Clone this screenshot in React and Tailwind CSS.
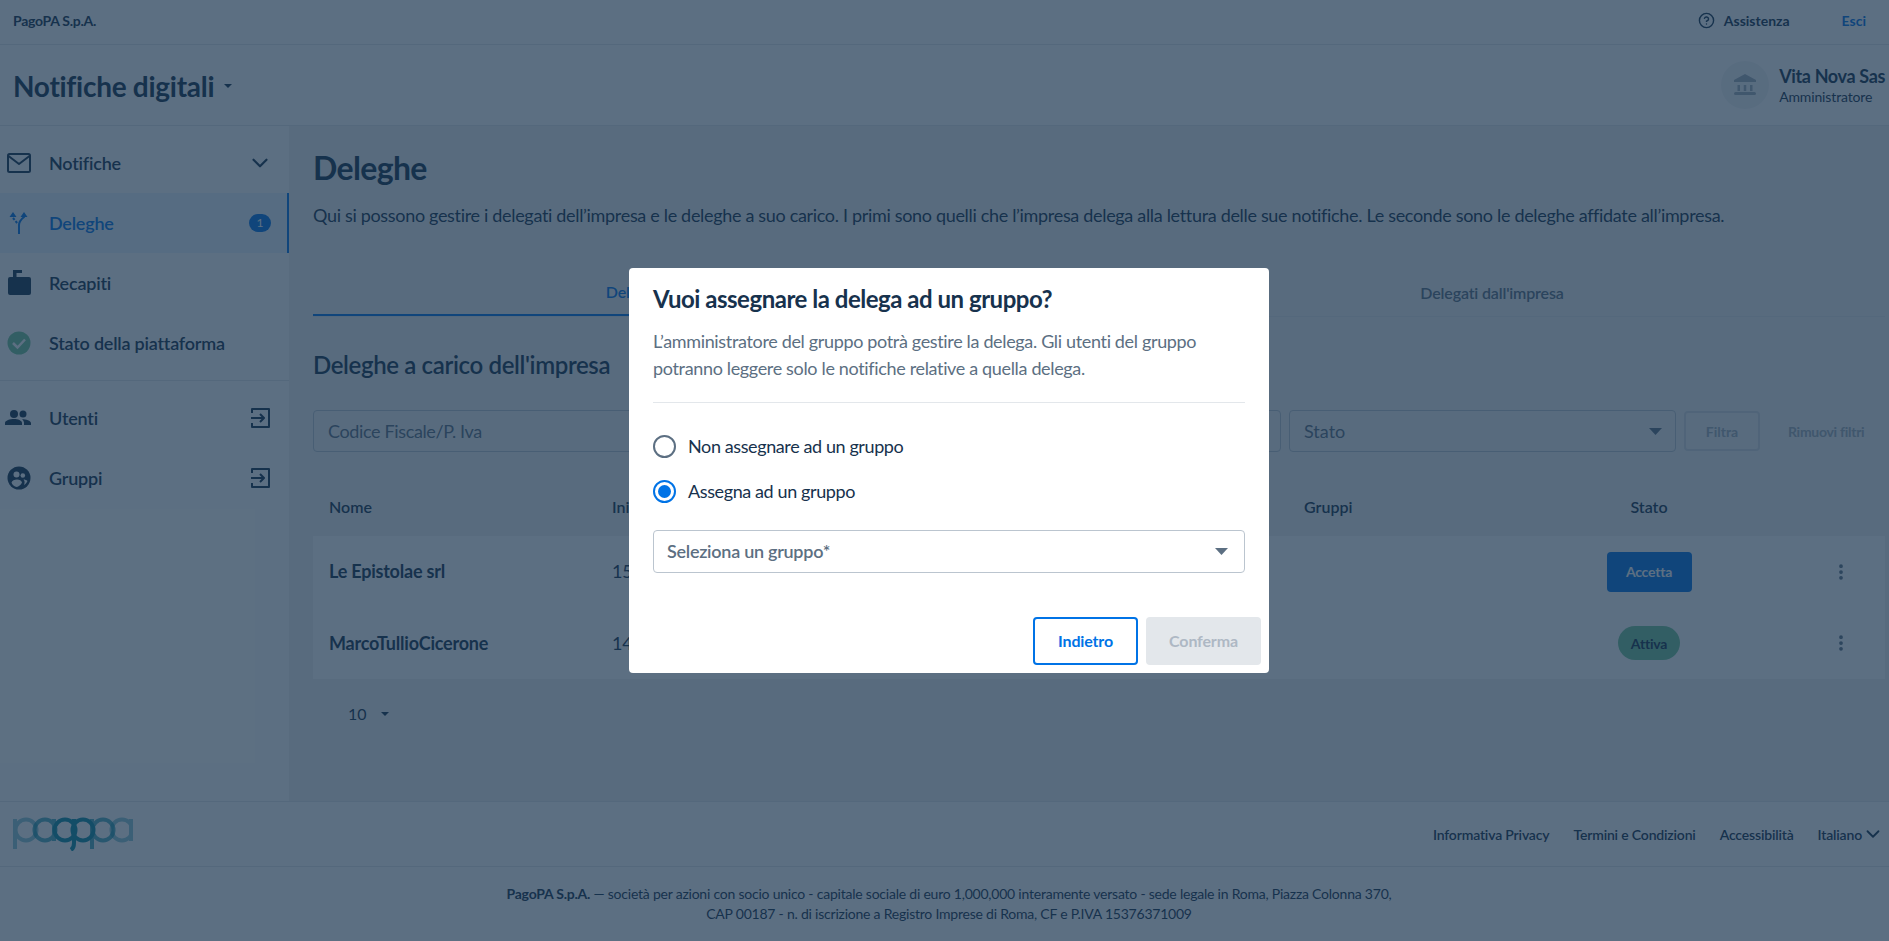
import React from 'react'
import { ChevronDown, CircleHelp, MoreVertical } from 'lucide-react'

const font = 'font-["Lato","Noto_Sans",sans-serif]'
const tableCols = 'grid grid-cols-[283px_692px_230px_230px_1fr] items-center pl-[16px]'

// Rings and stems of the PagoPA mark
function PagoPaLogo() {
  return (
    <svg width="120" height="34" viewBox="0 0 120 34" fill="none">
      <g stroke="#0B8CA5" strokeWidth="4">
        <g opacity="0.45">
          <circle cx="13" cy="13" r="10.5" />
          <path d="M2 2v30" />
          <circle cx="109" cy="13" r="10.5" />
          <path d="M118 2v22" />
        </g>
        <g opacity="0.7">
          <circle cx="32" cy="13" r="10.5" />
          <path d="M41 2v22" />
          <circle cx="90" cy="13" r="10.5" />
          <path d="M79 2v30" />
        </g>
        <circle cx="52" cy="13" r="10.5" />
        <circle cx="70" cy="13" r="10.5" />
        <path d="M61 2v24q0 5-3 7" />
      </g>
    </svg>
  )
}

function SideItem({ icon, label, active, right }) {
  return (
    <div className={`h-[60px] flex items-center pl-[7px] pr-[17px] ${active ? 'bg-[#EBF4FD] border-r-2 border-[#0073E6] text-[#0073E6]' : 'text-[#17324D]'}`}>
      <span className="w-6 shrink-0 flex justify-center">{icon}</span>
      <span className="ml-[18px] text-[18px] font-semibold tracking-[-0.012em] flex-1">{label}</span>
      {right}
    </div>
  )
}

function Caret({ className = '', width = 10, height = 5 }) {
  return (
    <svg width={width} height={height} viewBox="0 0 10 5" preserveAspectRatio="none" className={className}>
      <path d="M0 0h10L5 5z" fill="currentColor" />
    </svg>
  )
}

function ExitIcon() {
  return (
    <svg width="24" height="24" viewBox="0 0 24 24" fill="none" stroke="#17324D" strokeWidth="2" strokeLinejoin="round">
      <path d="M4 7V3h17v18H4v-4" />
      <path d="M3 12h13M12 8l4 4-4 4" />
    </svg>
  )
}

export default function App() {
  return (
    <div className={`relative h-[941px] overflow-hidden bg-white text-[#17324D] ${font}`}>
      {/* Top bar */}
      <div className="h-[45px] flex items-center justify-between border-b border-[#E3E7EB] pl-[13px] pr-[23px] pb-[3px] text-[14px] font-bold">
        <span className="tracking-[-0.02em]">PagoPA S.p.A.</span>
        <div className="flex items-center">
          <CircleHelp size={17} strokeWidth={2} />
          <span className="ml-[9px]">Assistenza</span>
          <span className="ml-[52px] text-[#0073E6]">Esci</span>
        </div>
      </div>

      {/* Product bar */}
      <div className="h-[81px] flex items-center justify-between border-b border-[#E3E7EB] pl-[13px] pr-[4px]">
        <div className="flex items-center pt-[2px]">
          <span className="text-[28px] font-bold tracking-[-0.01em]">Notifiche digitali</span>
          <Caret className="ml-[10px]" width={8} height={4} />
        </div>
        <div className="flex items-center">
          <div className="w-12 h-12 rounded-full bg-[#F2F4F6] flex items-center justify-center">
            <svg width="24" height="24" viewBox="0 0 24 24" fill="#A2ADB8">
              <path d="M12 1 1 7v2h22V7zM4.500 12v6h2.500v-6zM10.750 12v6h2.500v-6zM17 12v6h2.500v-6zM1 20.500a1.500 1.500 0 0 1 1.500-1.500h19a1.500 1.500 0 0 1 0 3h-19A1.500 1.500 0 0 1 1 20.500z" />
            </svg>
          </div>
          <div className="ml-[10px]">
            <div className="text-[18px] font-bold leading-[24px] tracking-[-0.02em]">Vita Nova Sas</div>
            <div className="text-[14px] leading-[18px] tracking-[-0.01em]">Amministratore</div>
          </div>
        </div>
      </div>

      {/* Body */}
      <div className="flex h-[675px]">
        <aside className="w-[289px] shrink-0 pt-[7px]">
          <SideItem
            icon={
              <svg width="24" height="24" viewBox="0 0 24 24" fill="none" stroke="#17324D" strokeWidth="2" strokeLinejoin="round">
                <rect x="1" y="3" width="22" height="18" rx="1.500" />
                <path d="m1.500 5 10.500 8 10.500-8" />
              </svg>
            }
            label="Notifiche"
            right={<ChevronDown size={26} strokeWidth={2} className="mr-[-1px]" />}
          />
          <SideItem
            active
            icon={
              <svg width="24" height="24" viewBox="0 0 24 24" fill="none" stroke="#0073E6" strokeWidth="2">
                <path d="M12 23v-9q0-4 5-8V4" />
                <path d="M6 7l5 6" strokeDasharray="2.500 1.500" />
                <path d="M13.500 6 17 1l3.500 5zM2.500 6 6 1l3.500 5z" fill="#0073E6" stroke="none" />
              </svg>
            }
            label="Deleghe"
            right={<span className="w-[22px] h-[18px] rounded-full bg-[#0073E6] text-white text-[12px] flex items-center justify-center mr-[-1px]">1</span>}
          />
          <SideItem
            icon={
              <svg width="23" height="25" viewBox="0 0 23 25" className="mt-[-1px]" fill="#17324D">
                <path d="M5 0h9v3H8.500v4H21a2 2 0 0 1 2 2v14a2 2 0 0 1-2 2H2a2 2 0 0 1-2-2V9a2 2 0 0 1 2-2h3z" />
              </svg>
            }
            label="Recapiti"
          />
          <SideItem
            icon={
              <svg width="24" height="24" viewBox="0 0 24 24">
                <circle cx="12" cy="12" r="11.500" fill="#74C69A" />
                <path d="m6 12 4.500 4.500L18 8.500" fill="none" stroke="#fff" strokeWidth="2.500" />
              </svg>
            }
            label="Stato della piattaforma"
          />
          <div className="h-px bg-[#E3E7EB] mt-[7px] mb-[7px]" />
          <SideItem
            icon={
              <svg width="26" height="24" viewBox="0 0 26 24" className="ml-[-2px]" fill="#17324D">
                <circle cx="9" cy="8" r="4" />
                <circle cx="18" cy="8" r="3.500" />
                <path d="M0 19v-2c0-2.500 5-4 9-4s8 1.500 8 4v2zM19 19v-2c0-1.500-.7-2.700-2-3.700 4 0 9 1.500 9 3.700v2z" />
              </svg>
            }
            label="Utenti"
            right={<ExitIcon />}
          />
          <SideItem
            icon={
              <svg width="24" height="24" viewBox="0 0 24 24">
                <circle cx="12" cy="12" r="11.500" fill="#17324D" />
                <circle cx="9.500" cy="8.500" r="3" fill="#fff" />
                <circle cx="15.800" cy="9.500" r="2.300" fill="#fff" />
                <path d="M4.500 16.500c.5-2 3-3 5.500-3s4.500 1 5 3c-1 2.500-3.500 4-5.200 4.500-2.500-.5-4.500-2-5.300-4.500zM16.500 13.500c1.500 0 3 .5 4 1.500-.5 1.500-2 3-3.500 4 .3-1 .6-2 .6-3 0-1-.4-1.800-1.100-2.500z" fill="#fff" />
              </svg>
            }
            label="Gruppi"
            right={<ExitIcon />}
          />
        </aside>

        <main className="flex-1 min-w-0 bg-[#F2F2F2] pl-[24px] pr-[4px]">
          <h1 className="mt-[22px] text-[32px] font-bold leading-[40px] tracking-[-0.02em]">Deleghe</h1>
          <p className="mt-[13px] text-[18px] leading-[28px] tracking-[-0.018em] whitespace-nowrap">
            Qui si possono gestire i delegati dell’impresa e le deleghe a suo carico. I primi sono quelli che l’impresa delega alla lettura delle sue notifiche. Le seconde sono le deleghe affidate all’impresa.
          </p>

          {/* Tabs */}
          <div className="mt-[39px] flex h-[49px] text-[16px] font-semibold tracking-[-0.01em] border-b border-[#E3E7EB]">
            <div className="w-1/2 pt-[2px] flex items-center justify-center border-b-2 border-[#0073E6] text-[#0073E6]">Deleghe a carico dell'impresa</div>
            <div className="w-1/2 pt-[2px] flex items-center justify-center text-[#5C6F82]">Delegati dall'impresa</div>
          </div>

          <h2 className="mt-[32px] text-[24px] font-semibold leading-[32px] tracking-[-0.015em]">Deleghe a carico dell'impresa</h2>

          {/* Filters */}
          <div className="mt-[29px] flex items-center gap-2 h-[42px]">
            <div className="flex-1 h-full border border-[#BBC5CF] rounded flex items-center pl-[14px] text-[18px] tracking-[-0.02em] text-[#5C6F82]">Codice Fiscale/P. Iva</div>
            <div className="w-[387px] h-full border border-[#BBC5CF] rounded flex items-center justify-between pl-[14px] pr-[13px] text-[18px] text-[#5C6F82]">
              Stato
              <Caret width={13} height={7} />
            </div>
            <div className="w-[76px] h-[40px] border-2 border-[#D5DBE1] rounded flex items-center justify-center text-[14px] font-bold text-[#A2ADB8]">Filtra</div>
            <div className="ml-[20px] w-[97px] text-[14px] font-bold tracking-[-0.02em] text-[#A2ADB8] whitespace-nowrap">Rimuovi filtri</div>
          </div>

          {/* Table */}
          <div className={`${tableCols} mt-[26px] h-[58px] text-[16px] font-semibold`}>
            <span>Nome</span>
            <span>Inizio</span>
            <span>Gruppi</span>
            <span className="text-center">Stato</span>
          </div>
          <div className="bg-white text-[18px] tracking-[-0.012em]">
            <div className={`${tableCols} h-[71px]`}>
              <span className="font-bold">Le Epistolae srl</span>
              <span>15/03/2024</span>
              <span />
              <div className="flex justify-center">
                <div className="w-[85px] h-10 rounded bg-[#0073E6] text-white text-[14px] font-bold flex items-center justify-center">Accetta</div>
              </div>
              <div className="flex justify-end pr-[34px] text-[#5C6F82]"><MoreVertical size={20} strokeWidth={2.5} /></div>
            </div>
            <div className={`${tableCols} h-[72px]`}>
              <span className="font-bold">MarcoTullioCicerone</span>
              <span>14/03/2024</span>
              <span />
              <div className="flex justify-center">
                <div className="w-[62px] h-[34px] rounded-full bg-[#74C69A] text-[14px] font-bold flex items-center justify-center">Attiva</div>
              </div>
              <div className="flex justify-end pr-[34px] text-[#5C6F82]"><MoreVertical size={20} strokeWidth={2.5} /></div>
            </div>
          </div>
          <div className="mt-[23px] flex items-center pl-[35px] text-[16px]">
            10
            <Caret className="ml-[14px]" width={8} height={4} />
          </div>
        </main>
      </div>

      {/* Footer */}
      <footer className="border-t border-[#E3E7EB]">
        <div className="h-[65px] flex items-center justify-between border-b border-[#E3E7EB] pl-[13px] pr-[8px] text-[14px] font-semibold tracking-[-0.012em]">
          <PagoPaLogo />
          <div className="flex items-center gap-[24px]">
            <span>Informativa Privacy</span>
            <span>Termini e Condizioni</span>
            <span>Accessibilità</span>
            <span className="flex items-center">Italiano <ChevronDown size={22} className="mr-[-3px]" /></span>
          </div>
        </div>
        <div className="pt-[17px] pl-[9px] text-center text-[14px] leading-[20px] tracking-[-0.016em]">
          <p><b>PagoPA S.p.A.</b> — società per azioni con socio unico - capitale sociale di euro 1,000,000 interamente versato - sede legale in Roma, Piazza Colonna 370,</p>
          <p>CAP 00187 - n. di iscrizione a Registro Imprese di Roma, CF e P.IVA 15376371009</p>
        </div>
      </footer>

      {/* Backdrop + dialog */}
      <div className="absolute inset-0 bg-[#17324D]/70 flex items-center justify-center pl-[9px]">
        <div className="w-[640px] h-[405px] bg-white rounded flex flex-col">
          <div className="px-[24px] pt-[15px]">
            <h2 className="text-[24px] font-bold leading-[32px] tracking-[-0.02em]">Vuoi assegnare la delega ad un gruppo?</h2>
            <p className="mt-[13px] pb-[20px] text-[18px] leading-[27px] tracking-[-0.019em] text-[#5C6F82] border-b border-[#E3E7EB]">
              L’amministratore del gruppo potrà gestire la delega. Gli utenti del gruppo potranno leggere solo le notifiche relative a quella delega.
            </p>
            <div className="mt-[23px] flex items-center gap-[12px] h-[40px] text-[18px] tracking-[-0.022em]">
              <span className="w-[23px] h-[23px] rounded-full border-2 border-[#5C6F82]" />
              Non assegnare ad un gruppo
            </div>
            <div className="mt-[5px] flex items-center gap-[12px] h-[40px] text-[18px] tracking-[-0.022em]">
              <span className="w-[23px] h-[23px] rounded-full border-2 border-[#0073E6] flex items-center justify-center">
                <span className="w-[13px] h-[13px] rounded-full bg-[#0073E6]" />
              </span>
              Assegna ad un gruppo
            </div>
            <div className="mt-[19px] h-[43px] border border-[#BBC5CF] rounded flex items-center justify-between pl-[13px] pr-[16px] text-[18px] font-semibold tracking-[-0.015em] text-[#5C6F82]">
              Seleziona un gruppo*
              <Caret width={13} height={7} />
            </div>
          </div>
          <div className="mt-auto flex justify-end gap-2 p-2 tracking-[-0.01em]">
            <div className="w-[105px] h-[48px] border-2 border-[#0073E6] rounded flex items-center justify-center text-[16px] font-bold text-[#0073E6]">Indietro</div>
            <div className="w-[115px] h-[48px] rounded bg-[#E3E7EB] flex items-center justify-center text-[16px] font-bold text-[#AEB8C4]">Conferma</div>
          </div>
        </div>
      </div>
    </div>
  )
}
